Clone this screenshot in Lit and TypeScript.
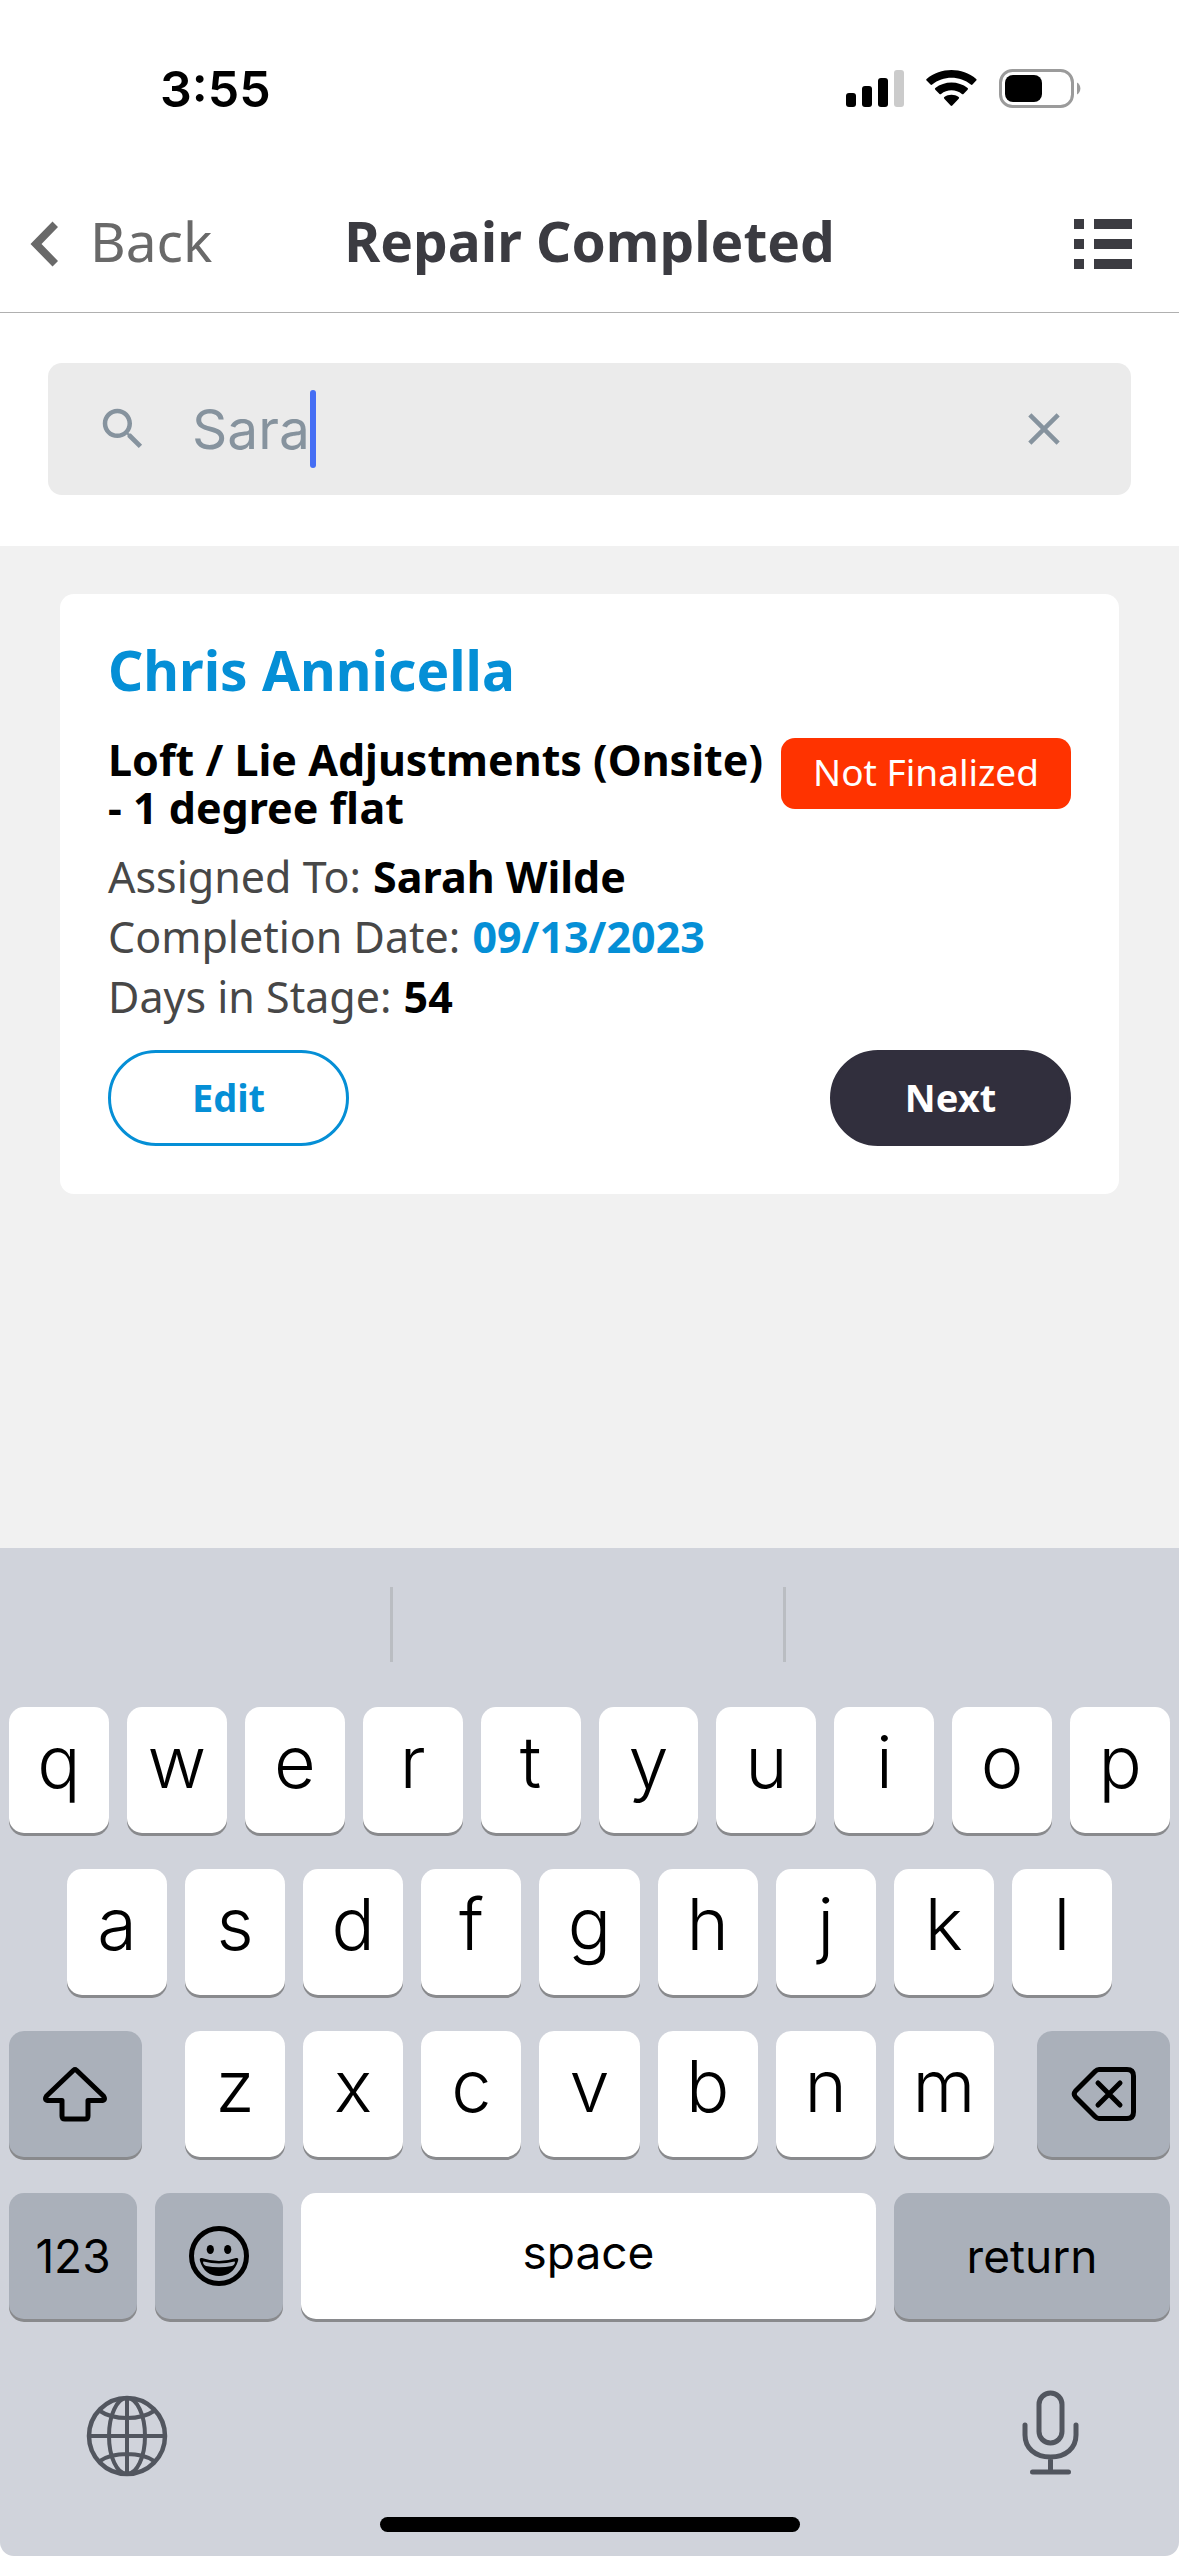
import { LitElement, html, css, svg } from "lit";
import { customElement, property, state } from "lit/decorators.js";

type Detail = { label: string; value: string; accent?: boolean };

const DETAILS: Detail[] = [
  { label: "Assigned To:", value: "Sarah Wilde" },
  { label: "Completion Date:", value: "09/13/2023", accent: true },
  { label: "Days in Stage:", value: "54" },
];

@customElement("status-bar")
export class StatusBar extends LitElement {
  static styles = css`
    :host {
      display: flex;
      align-items: center;
      justify-content: space-between;
      height: 177px;
      padding: 0 98px 0 160px;
      box-sizing: border-box;
      font-family: Inter, "Liberation Sans", sans-serif;
    }
    .time {
      font-size: 50px;
      line-height: 60px;
      font-weight: 600;
      color: #000;
    }
    .icons {
      display: block;
      width: 236px;
      height: 40px;
    }
  `;

  render() {
    return html`
      <span class="time">3:55</span>
      <svg class="icons" viewBox="0 0 236 40" role="img" aria-label="Signal, Wi-Fi and battery">
        <rect x="1" y="24" width="10" height="14" rx="3" />
        <rect x="17" y="17" width="10" height="21" rx="3" />
        <rect x="33" y="9" width="10" height="29" rx="3" />
        <rect x="49" y="1" width="10" height="37" rx="3" fill="#cbcbcb" />
        <path d="M81.6 11.6 a1.2 1.2 0 0 1 0 -1.7 C96 -2 117 -2 131.2 9.9 a1.2 1.2 0 0 1 0 1.7 L127.500 15.600 a1.200 1.200 0 0 1 -1.700 0 C115 6.500 98 6.500 87.200 15.600 a1.200 1.200 0 0 1 -1.700 0 Z" />
        <path d="M90.300 20.800 a1.200 1.200 0 0 1 0 -1.700 C99.500 11.700 113.500 11.700 122.600 19.100 a1.200 1.200 0 0 1 0 1.700 L118.500 24.900 a1.200 1.200 0 0 1 -1.600 0 C111 20 102 20 96.100 24.900 a1.200 1.200 0 0 1 -1.600 0 Z" />
        <path d="M99.300 29.800 a1.200 1.200 0 0 1 0 -1.700 C103.500 25 109.500 25 113.700 28.100 a1.200 1.200 0 0 1 0 1.700 L107.300 36.600 a1.200 1.200 0 0 1 -1.700 0 Z" />
        <rect x="155.500" y="1.500" width="72" height="36" rx="12" fill="none" stroke="#9b9b9b" stroke-width="3" />
        <rect x="160" y="6" width="37" height="27" rx="8" />
        <path d="M232 13.500 a7 7 0 0 1 0 12 Z" fill="#9b9b9b" />
      </svg>
    `;
  }
}

@customElement("repair-card")
export class RepairCard extends LitElement {
  @property() customer = "";
  @property() job = "";
  @property() status = "";
  @property({ attribute: false }) details: Detail[] = [];

  static styles = css`
    :host {
      display: block;
      padding: 46px 48px 48px;
      border-radius: 14px;
      background: #fff;
    }
    .name {
      margin: 0;
      font-size: 55px;
      line-height: 60px;
      font-weight: 700;
      color: #058fd6;
    }
    .summary {
      display: flex;
      align-items: flex-start;
      justify-content: space-between;
      gap: 12px;
      margin-top: 36px;
    }
    .job {
      margin: 0;
      font-size: 43px;
      line-height: 48px;
      font-weight: 700;
      color: #000;
    }
    .badge {
      flex: none;
      margin-top: 2px;
      padding: 0 32px 4px;
      border-radius: 14px;
      background: #ff3300;
      color: #fff;
      font-size: 37px;
      line-height: 67px;
      white-space: nowrap;
    }
    .details {
      margin: 15px 0 0;
      font-size: 43px;
      line-height: 60px;
      color: #474747;
    }
    .row {
      display: flex;
      gap: 12px;
    }
    .value {
      margin: 0;
      font-weight: 700;
      color: #000;
    }
    .accent {
      color: #058fd6;
    }
    .actions {
      display: flex;
      justify-content: space-between;
      margin-top: 23px;
    }
    .action {
      width: 241px;
      height: 96px;
      padding: 0 0 3px;
      border: 3px solid #058fd6;
      border-radius: 48px;
      background: #fff;
      color: #058fd6;
      font: inherit;
      font-size: 38px;
      font-weight: 700;
    }
    .primary {
      border-color: #312f3d;
      background: #312f3d;
      color: #fff;
    }
  `;

  render() {
    return html`
      <h2 class="name">${this.customer}</h2>
      <div class="summary">
        <h3 class="job">${this.job}</h3>
        <span class="badge">${this.status}</span>
      </div>
      <dl class="details">
        ${this.details.map(
          (d) => html`<div class="row">
            <dt>${d.label}</dt>
            <dd class="value ${d.accent ? "accent" : ""}">${d.value}</dd>
          </div>`
        )}
      </dl>
      <div class="actions">
        <button class="action">Edit</button>
        <button class="action primary">Next</button>
      </div>
    `;
  }
}

@customElement("soft-keyboard")
export class SoftKeyboard extends LitElement {
  static styles = css`
    :host {
      display: block;
      border-radius: 0 0 14px 14px;
      background: #d0d3db;
      font-family: Inter, "Liberation Sans", sans-serif;
      color: #000;
    }
    .suggestions {
      display: grid;
      grid-template-columns: repeat(3, 1fr);
      padding: 39px 0 45px;
    }
    .slot {
      height: 75px;
      border-right: 3px solid #babdc2;
    }
    .slot:last-child {
      border-right: 0;
    }
    .rows {
      display: flex;
      flex-direction: column;
      gap: 36px;
      padding: 0 9px;
    }
    .keys {
      display: flex;
      flex: 1;
      gap: 18px;
    }
    .inset {
      padding: 0 58px;
    }
    .outer {
      display: flex;
      gap: 43px;
    }
    .key {
      display: flex;
      flex: 1;
      align-items: center;
      justify-content: center;
      min-width: 0;
      height: 126px;
      padding: 0 0 18px;
      border: 0;
      border-radius: 15px;
      background: #fff;
      box-shadow: 0 3px 0 #898a8d;
      color: inherit;
      font: inherit;
      font-size: 72px;
      font-weight: 350;
    }
    .word {
      padding: 0 0 8px;
      font-size: 46px;
      font-weight: 400;
    }
    .dark {
      padding: 0;
      background: #aab0ba;
    }
    .side {
      flex: 0 0 133px;
    }
    .mode {
      flex: 0 0 128px;
    }
    .enter {
      flex: 0 0 276px;
    }
    .tools {
      display: flex;
      justify-content: space-between;
      padding: 69px 84px 36px;
    }
    .tool {
      display: block;
      padding: 0;
      border: 0;
      background: none;
    }
    .icon {
      display: block;
    }
    .home {
      width: 420px;
      height: 15px;
      margin: 0 auto;
      border-radius: 8px;
      background: #000;
    }
    .foot {
      padding-bottom: 24px;
    }
  `;

  private letters(keys: string) {
    return [...keys].map((k) => html`<button class="key">${k}</button>`);
  }

  render() {
    return html`
      <div class="suggestions">
        <div class="slot"></div>
        <div class="slot"></div>
        <div class="slot"></div>
      </div>
      <div class="rows">
        <div class="keys">${this.letters("qwertyuiop")}</div>
        <div class="keys inset">${this.letters("asdfghjkl")}</div>
        <div class="outer">
          <button class="key dark side" aria-label="Shift">
            <svg class="icon" width="66" height="60" viewBox="0 0 66 60" fill="none" stroke="#000" stroke-width="5" stroke-linejoin="round">
              <path d="M30.500 6.300 Q32 5 33.500 6.300 L60.500 32 Q63 36 59 36.500 H45 V52 Q45 55 42 55 H22 Q19 55 19 52 V36.500 H5 Q1 36 3.500 32 Z" />
            </svg>
          </button>
          <div class="keys">${this.letters("zxcvbnm")}</div>
          <button class="key dark side" aria-label="Delete">
            <svg class="icon" width="66" height="60" viewBox="0 0 66 60" fill="none" stroke="#000" stroke-width="5" stroke-linecap="round" stroke-linejoin="round">
              <path d="M28 5.500 H56 Q62.500 5.500 62.500 12 V48 Q62.500 54.500 56 54.500 H28 Q26 54.500 24 52.500 L4.500 33 Q2 30 4.500 27 L24 7.500 Q26 5.500 28 5.500 Z" />
              <path d="M27 19 L49 41 M49 19 L27 41" />
            </svg>
          </button>
        </div>
        <div class="keys">
          <button class="key word dark mode">123</button>
          <button class="key dark mode" aria-label="Emoji">
            <svg class="icon" width="60" height="60" viewBox="0 0 60 60">
              <circle cx="30" cy="30" r="27.500" fill="none" stroke="#000" stroke-width="5" />
              <ellipse cx="21.300" cy="23.500" rx="3.600" ry="4.600" />
              <ellipse cx="38.700" cy="23.500" rx="3.600" ry="4.600" />
              <path d="M13 32 Q30 38 47 32 Q50 31.500 49 35 C46 45 39 50 30 50 C21 50 14 45 11 35 Q10 31.500 13 32 Z" />
              <path d="M14.500 35.500 Q30 39.500 45.500 35.500 Q46.500 35.500 45.500 38 Q44.500 39.500 43 40 Q30 42.500 17 40 Q15.500 39.500 14.500 38 Q13.500 35.500 14.500 35.500 Z" fill="#aab0ba" />
            </svg>
          </button>
          <button class="key word">space</button>
          <button class="key word dark enter">return</button>
        </div>
      </div>
      <div class="tools">
        <button class="tool" aria-label="Next keyboard">
          <svg class="icon" width="86" height="93" viewBox="0 0 86 93" fill="none" stroke="#52565f" stroke-width="4">
            <circle cx="43" cy="48" r="38" stroke-width="4.500" />
            <ellipse cx="43" cy="48" rx="18" ry="38" />
            <path d="M43 10 V86 M5 48 H81 M16 23 Q26 30 43 30 Q60 30 70 23 M16 73 Q26 66 43 66 Q60 66 70 73" />
          </svg>
        </button>
        <button class="tool" aria-label="Dictate">
          <svg class="icon" width="90" height="93" viewBox="0 0 90 93" fill="none" stroke="#52565f" stroke-width="5" stroke-linecap="round">
            <rect x="34" y="5" width="23" height="50" rx="11.500" />
            <path d="M20 37 V47 C20 60 30 69 45.500 69 C61 69 71 60 71 47 V37 M45.500 69 V84 M27.500 84 H63.500" />
          </svg>
        </button>
      </div>
      <div class="foot"><div class="home"></div></div>
    `;
  }
}

@customElement("app-root")
export class AppRoot extends LitElement {
  @state() private query = "Sara";

  static styles = css`
    :host {
      display: flex;
      flex-direction: column;
      min-height: 100vh;
      background: #fff;
      font-family: "Noto Sans", "Liberation Sans", sans-serif;
    }
    .header {
      display: grid;
      grid-template-columns: 1fr auto 1fr;
      align-items: center;
      height: 136px;
      padding: 0 30px 2px;
      box-sizing: border-box;
      border-bottom: 1px solid #b0b0b0;
    }
    .back {
      display: flex;
      align-items: center;
      gap: 30px;
      color: #696969;
      font-size: 55px;
      line-height: 60px;
      text-decoration: none;
    }
    .label {
      padding-bottom: 6px;
    }
    .title {
      margin: 0;
      padding-bottom: 6px;
      font-size: 55px;
      line-height: 60px;
      font-weight: 700;
      color: #3b3b41;
    }
    .menu {
      justify-self: end;
      padding: 0 17px;
      border: 0;
      background: none;
    }
    .icon {
      display: block;
    }
    .search {
      padding: 50px 48px 51px;
    }
    .field {
      display: flex;
      align-items: center;
      height: 132px;
      padding: 0 60px 0 48px;
      box-sizing: border-box;
      border-radius: 14px;
      background: #ebebeb;
      color: #86939e;
    }
    .query {
      field-sizing: content;
      margin: 0 0 0 42px;
      padding: 0;
      border: 0;
      outline: 0;
      background: none;
      color: inherit;
      caret-color: transparent;
      font-family: Inter, "Liberation Sans", sans-serif;
      font-size: 55px;
      line-height: 78px;
    }
    .caret {
      width: 6px;
      height: 78px;
      border-radius: 3px;
      background: #456ef4;
    }
    .clear {
      margin-left: auto;
      padding: 0;
      border: 0;
      background: none;
      color: inherit;
    }
    .list {
      flex: 1;
      padding: 48px 60px;
      background: #f1f1f1;
    }
  `;

  render() {
    return html`
      <status-bar></status-bar>
      <header class="header">
        <a class="back" href="#">
          <svg class="icon" width="30" height="46" viewBox="0 0 30 46" fill="#696969" aria-hidden="true">
            <path d="M22.500 0.500 L28 6 L11.500 23 L28 40 L22.500 45.500 L0.500 23 Z" />
          </svg>
          <span class="label">Back</span>
        </a>
        <h1 class="title">Repair Completed</h1>
        <button class="menu" aria-label="Menu">
          <svg class="icon" width="58" height="50" viewBox="0 0 58 50" fill="#3b3b41">
            ${[0, 20, 40].map((y) => svg`<rect x="0" y=${y} width="10" height="10" /><rect x="20" y=${y} width="38" height="10" />`)}
          </svg>
        </button>
      </header>
      <div class="search">
        <div class="field">
          <svg class="icon" width="54" height="54" viewBox="0 0 24 24" fill="currentColor" aria-hidden="true">
            <path d="M15.500 14h-.79l-.28-.27C15.410 12.590 16 11.110 16 9.500 16 5.910 13.090 3 9.500 3S3 5.910 3 9.500 5.910 16 9.500 16c1.610 0 3.090-.59 4.230-1.570l.27.28v.79l5 4.990L20.490 19l-4.990-5zm-6 0C7.010 14 5 11.990 5 9.500S7.010 5 9.500 5 14 7.010 14 9.500 11.990 14 9.500 14z" />
          </svg>
          <input
            class="query"
            type="text"
            aria-label="Search repairs"
            .value=${this.query}
            @input=${(e: Event) => (this.query = (e.target as HTMLInputElement).value)}
          />
          <span class="caret"></span>
          <button class="clear" aria-label="Clear search" @click=${() => (this.query = "")}>
            <svg class="icon" width="54" height="54" viewBox="0 0 24 24" fill="currentColor">
              <path d="M19 6.410L17.590 5 12 10.590 6.410 5 5 6.410 10.590 12 5 17.590 6.410 19 12 13.410 17.590 19 19 17.590 13.410 12z" />
            </svg>
          </button>
        </div>
      </div>
      <main class="list">
        <repair-card
          customer="Chris Annicella"
          job="Loft / Lie Adjustments (Onsite) - 1 degree flat"
          status="Not Finalized"
          .details=${DETAILS}
        ></repair-card>
      </main>
      <soft-keyboard></soft-keyboard>
    `;
  }
}
